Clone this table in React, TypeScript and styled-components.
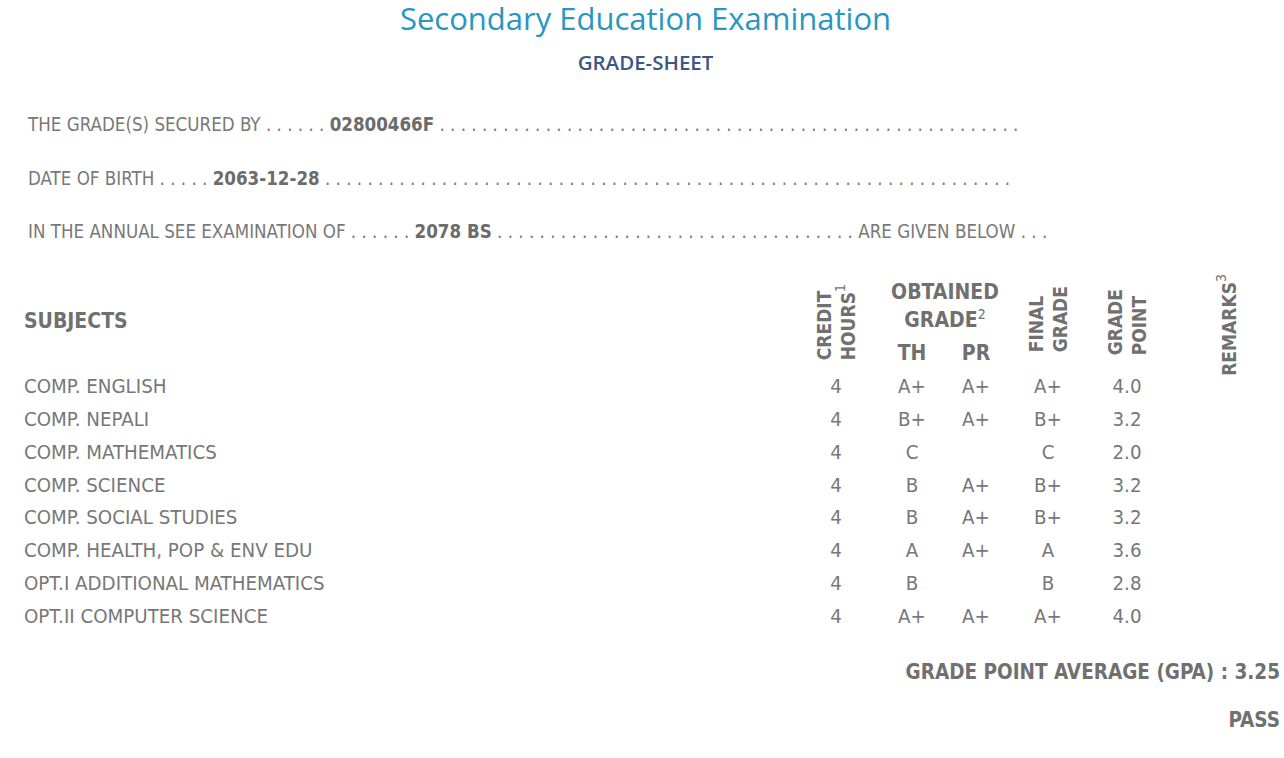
import React from 'react';
import styled, { createGlobalStyle } from 'styled-components';

const GlobalStyle = createGlobalStyle`
    html, body {
        margin: 0;
        padding: 0;
        background: #ffffff;
    }
    body {
        font-family: 'DejaVu Sans Condensed', 'DejaVu Sans', sans-serif;
        color: #767676;
    }
`;

interface SubjectRow {
    name: string;
    credit: string;
    th: string;
    pr: string;
    final: string;
    point: string;
}

const rows: SubjectRow[] = [
    { name: 'COMP. ENGLISH', credit: '4', th: 'A+', pr: 'A+', final: 'A+', point: '4.0' },
    { name: 'COMP. NEPALI', credit: '4', th: 'B+', pr: 'A+', final: 'B+', point: '3.2' },
    { name: 'COMP. MATHEMATICS', credit: '4', th: 'C', pr: '', final: 'C', point: '2.0' },
    { name: 'COMP. SCIENCE', credit: '4', th: 'B', pr: 'A+', final: 'B+', point: '3.2' },
    { name: 'COMP. SOCIAL STUDIES', credit: '4', th: 'B', pr: 'A+', final: 'B+', point: '3.2' },
    { name: 'COMP. HEALTH, POP & ENV EDU', credit: '4', th: 'A', pr: 'A+', final: 'A', point: '3.6' },
    { name: 'OPT.I ADDITIONAL MATHEMATICS', credit: '4', th: 'B', pr: '', final: 'B', point: '2.8' },
    { name: 'OPT.II COMPUTER SCIENCE', credit: '4', th: 'A+', pr: 'A+', final: 'A+', point: '4.0' },
];

const dots = (n: number) => Array(n).fill('.').join(' ');

export default function App() {
    return (
        <Page>
            <GlobalStyle />
            <Title>Secondary Education Examination</Title>
            <SubTitle>GRADE-SHEET</SubTitle>

            <InfoBlock>
                <InfoLine>
                    THE GRADE(S) SECURED BY {dots(6)} <b>02800466F</b> {dots(55)}
                </InfoLine>
                <InfoLine>
                    DATE OF BIRTH {dots(5)} <b>2063-12-28</b> {dots(65)}
                </InfoLine>
                <InfoLine>
                    IN THE ANNUAL SEE EXAMINATION OF {dots(6)} <b>2078 BS</b> {dots(34)} ARE GIVEN BELOW {dots(3)}
                </InfoLine>
            </InfoBlock>

            <HeadGrid>
                <SubjectsHead>SUBJECTS</SubjectsHead>
                <VerticalHead $col={2} $drop={10}>
                    CREDIT
                    <br />
                    HOURS<Sup>1</Sup>
                </VerticalHead>
                <ObtainedHead>
                    OBTAINED
                    <br />
                    GRADE<Sup>2</Sup>
                </ObtainedHead>
                <SubHead $col={3}>TH</SubHead>
                <SubHead $col={4}>PR</SubHead>
                <VerticalHead $col={5} $drop={18}>
                    FINAL
                    <br />
                    GRADE
                </VerticalHead>
                <VerticalHead $col={6} $drop={15} $shift={-18}>
                    GRADE
                    <br />
                    POINT
                </VerticalHead>
                <VerticalHead $col={7} $drop={-6}>
                    REMARKS<Sup>3</Sup>
                </VerticalHead>
            </HeadGrid>

            <Body>
                {rows.map((r) => (
                    <Row key={r.name}>
                        <SubjectCell>{r.name}</SubjectCell>
                        <Cell>{r.credit}</Cell>
                        <Cell>{r.th}</Cell>
                        <Cell>{r.pr}</Cell>
                        <Cell>{r.final}</Cell>
                        <Cell $shift={-18}>{r.point}</Cell>
                        <Cell />
                    </Row>
                ))}
            </Body>

            <Summary>GRADE POINT AVERAGE (GPA) : 3.25</Summary>
            <Result>PASS</Result>
        </Page>
    );
}

const columns = '774px 76px 76px 52px 92px 84px 102px';

const Page = styled.div`
    width: 1284px;
    height: 758px;
    box-sizing: border-box;
    padding: 0 4px 0 24px;
    overflow: hidden;
`;
const Title = styled.h1`
    margin: 0;
    padding: 1px 13px 0 0;
    font-family: 'Open Sans', 'Noto Sans', sans-serif;
    font-weight: 400;
    font-size: 31px;
    line-height: 34px;
    text-align: center;
    color: #2897bf;
`;
const SubTitle = styled.h2`
    margin: 15px 0 0;
    padding-right: 13px;
    font-family: 'Open Sans', 'Noto Sans', sans-serif;
    font-weight: 600;
    font-size: 20.5px;
    line-height: 24px;
    text-align: center;
    color: #3b5783;
`;
const InfoBlock = styled.div`
    display: flex;
    flex-direction: column;
    gap: 29.5px;
    margin-top: 39px;
    padding-left: 4px;
`;
const InfoLine = styled.div`
    font-size: 18.6px;
    line-height: 24px;
    white-space: nowrap;
    color: #787878;
    b {
        color: #6c6c6c;
    }
`;
const HeadGrid = styled.div`
    display: grid;
    grid-template-columns: ${columns};
    grid-template-rows: 66px 36px;
    margin-top: 24px;
    height: 102px;
    font-weight: 700;
    font-size: 21px;
    color: #707070;
`;
const SubjectsHead = styled.div`
    grid-column: 1;
    grid-row: 1 / span 2;
    align-self: center;
    padding-top: 4px;
`;
const VerticalHead = styled.div<{ $col: number; $drop: number; $shift?: number }>`
    grid-column: ${(p) => p.$col};
    grid-row: 1 / span 2;
    justify-self: center;
    align-self: end;
    margin-bottom: ${(p) => p.$drop}px;
    margin-left: ${(p) => (p.$shift ? p.$shift : 0)}px;
    writing-mode: vertical-rl;
    transform: rotate(180deg);
    font-size: 19px;
    line-height: 24px;
    white-space: nowrap;
`;
const ObtainedHead = styled.div`
    grid-column: 3 / span 2;
    grid-row: 1;
    align-self: end;
    text-align: center;
    line-height: 28px;
    padding-left: 14px;
`;
const SubHead = styled.div<{ $col: number }>`
    grid-column: ${(p) => p.$col};
    grid-row: 2;
    text-align: center;
    line-height: 24px;
    padding-top: 7px;
`;
const Sup = styled.sup`
    font-weight: 400;
    font-size: 14px;
    vertical-align: 8px;
    line-height: 0;
`;
const Body = styled.div`
    display: flex;
    flex-direction: column;
`;
const Row = styled.div`
    display: grid;
    grid-template-columns: ${columns};
    height: 32.75px;
    align-items: center;
    font-size: 20.3px;
    color: #777777;
`;
const SubjectCell = styled.div`
    white-space: nowrap;
`;
const Cell = styled.div<{ $shift?: number }>`
    text-align: center;
    margin-left: ${(p) => (p.$shift ? p.$shift : 0)}px;
`;
const Summary = styled.div`
    margin-top: 28px;
    text-align: right;
    font-weight: 700;
    font-size: 20.5px;
    line-height: 24px;
    color: #707070;
    white-space: nowrap;
`;
const Result = styled(Summary)`
    margin-top: 24px;
`;
